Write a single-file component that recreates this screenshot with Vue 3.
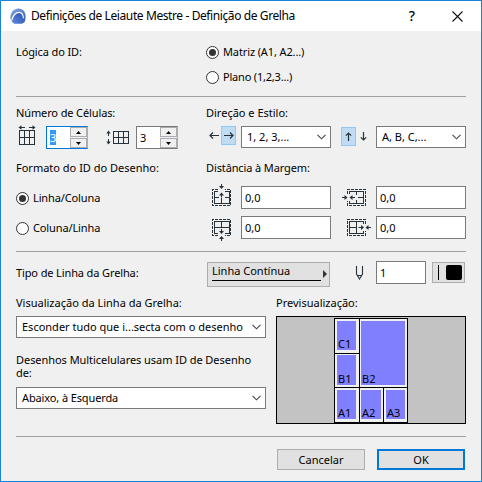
<script setup>
import { ref } from 'vue'

const idLogic = ref('matrix')
const idFormat = ref('row')
const margins = ref({ top: '0,0', left: '0,0', bottom: '0,0', right: '0,0' })
const cells = [
  { id: 'C1', x: 61, y: 5, w: 19, h: 29 },
  { id: 'B1', x: 61, y: 39, w: 19, h: 30 },
  { id: 'B2', x: 85, y: 5, w: 44, h: 64 },
  { id: 'A1', x: 61, y: 74, w: 19, h: 29 },
  { id: 'A2', x: 85, y: 74, w: 20, h: 29 },
  { id: 'A3', x: 110, y: 74, w: 19, h: 29 },
]
</script>

<template>
  <div class="dialog">
    <header class="titlebar">
      <svg class="logo" width="16" height="16" viewBox="0 0 16 16">
        <defs>
          <linearGradient id="band" x1="0" y1="0" x2="1" y2="1">
            <stop offset="0" stop-color="#86abea" /><stop offset="1" stop-color="#2e56b4" />
          </linearGradient>
          <linearGradient id="inner" x1="0" y1="1" x2="1" y2="0">
            <stop offset="0" stop-color="#5f8ade" /><stop offset="1" stop-color="#2a4fae" />
          </linearGradient>
        </defs>
        <path d="M.4 10.500C-.2 4.500 4 .4 8.600 .4c4.500 .1 7 3.600 7 8.200 0 2.500-.4 4-1.200 5.600l-2 1.200H4L1.300 13z" fill="url(#band)" />
        <path d="M2.200 13.500C3.500 8 6.200 4.700 9.300 4.800c2.900 .1 4 3.200 4.300 9l-2 1.600H4.200z" fill="url(#inner)" />
        <path d="M1.600 12.600C3 7.500 6 4.200 9.300 4.300c2.900 .1 3.900 2.800 4.200 6" fill="none" stroke="#fff" stroke-width="1.200" />
      </svg>
      <h1 class="title">Definições de Leiaute Mestre - Definição de Grelha</h1>
      <span class="help">?</span>
      <svg class="close" width="11" height="11" viewBox="0 0 11 11"><path d="M.5.5l10 10M10.500.5l-10 10" stroke="#111" stroke-width="1.100" /></svg>
    </header>

    <main class="content">
      <section class="logic cols">
        <div class="label tight">Lógica do ID:</div>
        <div class="logic-options">
          <label class="radio tight" @click="idLogic = 'matrix'"><i class="dot" :class="{ on: idLogic === 'matrix' }"></i><span>Matriz (A1, A2...)</span></label>
          <label class="radio tighter" @click="idLogic = 'plan'"><i class="dot" :class="{ on: idLogic === 'plan' }"></i><span>Plano (1,2,3...)</span></label>
        </div>
      </section>

      <hr class="rule">

      <section class="cols numbers">
        <div>
          <div class="label tight">Número de Células:</div>
          <div class="controls">
            <svg class="ic-cols" width="30" height="23" viewBox="0 0 30 23">
              <g fill="none" stroke="#27323a" shape-rendering="crispEdges"><path d="M3.500 4.500h15v14h-15zM8.500 4.500v14M13.500 4.500v14M3.500 11.500h15M4 1.500h5M13 1.500h5" /></g>
              <path d="M2.500 1.500l3-2.200v4.400zM19.500 1.500l-3-2.200v4.400z" fill="#27323a" />
            </svg>
            <div class="spinner active">
              <span class="val"><mark>3</mark></span>
              <span class="steps"><b><svg width="5" height="3"><path d="M0 3h5L2.500 0z" /></svg></b><b><svg width="5" height="3"><path d="M0 0h5L2.500 3z" /></svg></b></span>
            </div>
            <svg class="ic-rows" width="30" height="23" viewBox="0 0 30 23">
              <g fill="none" stroke="#27323a" shape-rendering="crispEdges"><path d="M7.500 5.500h15v12h-15zM12.500 5.500v12M17.500 5.500v12M7.500 11.500h15M2.500 6v4M2.500 13v4" /></g>
              <path d="M2.500 4.500l2.200 3h-4.400zM2.500 18.500l2.200-3h-4.400z" fill="#27323a" />
            </svg>
            <div class="spinner">
              <span class="val">3</span>
              <span class="steps"><b><svg width="5" height="3"><path d="M0 3h5L2.500 0z" /></svg></b><b><svg width="5" height="3"><path d="M0 0h5L2.500 3z" /></svg></b></span>
            </div>
          </div>
        </div>
        <div>
          <div class="label">Direção e Estilo:</div>
          <div class="controls">
            <div class="pair">
              <span class="arrow"><svg width="10" height="7" viewBox="0 0 10 7"><path d="M10 3.500H1M4 .5l-3 3 3 3" /></svg></span>
              <span class="arrow sel"><svg width="10" height="7" viewBox="0 0 10 7"><path d="M0 3.500h9M6 .5l3 3-3 3" /></svg></span>
            </div>
            <div class="combo small"><span>1, 2, 3,...</span><svg class="chev" width="9" height="6" viewBox="0 0 9 6"><path d="M.5.8l4 4 4-4" /></svg></div>
            <div class="pair vertical">
              <span class="arrow sel"><svg width="7" height="9" viewBox="0 0 7 9"><path d="M3.500 9V1M.8 3.700L3.500 1l2.700 2.700" /></svg></span>
              <span class="arrow"><svg width="7" height="9" viewBox="0 0 7 9"><path d="M3.500 0v8M.8 5.300L3.500 8l2.700-2.700" /></svg></span>
            </div>
            <div class="combo small"><span>A, B, C,...</span><svg class="chev" width="9" height="6" viewBox="0 0 9 6"><path d="M.5.8l4 4 4-4" /></svg></div>
          </div>
        </div>
      </section>

      <section class="cols format">
        <div>
          <div class="label">Formato do ID do Desenho:</div>
          <div class="format-options">
            <label class="radio tight" @click="idFormat = 'row'"><i class="dot" :class="{ on: idFormat === 'row' }"></i><span>Linha/Coluna</span></label>
            <label class="radio tight" @click="idFormat = 'col'"><i class="dot" :class="{ on: idFormat === 'col' }"></i><span>Coluna/Linha</span></label>
          </div>
        </div>
        <div>
          <div class="label tight">Distância à Margem:</div>
          <div class="margins">
            <svg width="35" height="25" viewBox="0 0 35 25">
              <g class="frame"><path class="dash" d="M12 3.500H6.500v16h18v-16H19" /><path d="M12 5.500H8.500v12h15v-12H19M8.500 11.500h4M18.500 11.500h5M15.500 12v6" /></g>
              <path class="tips" d="M15-2h1v2h2l-2.500 3-2.500-3h2zM15 11.500h1v-2h2l-2.500-3-2.500 3h2z" />
            </svg>
            <div class="field">{{ margins.top }}</div>
            <svg width="45" height="25" viewBox="0 0 45 25">
              <g class="frame"><path class="dash" d="M16.500 8V3.500h18v16h-18V15" /><path d="M18.500 8V5.500h14v12h-14V15M27 11.500h5M25.500 6v3M25.500 14v4" /></g>
              <path class="tips" d="M11 11h2.500V9l3 2.500-3 2.500v-2H11zM24 11h-2.500V9l-3 2.500 3 2.500v-2H24z" />
            </svg>
            <div class="field">{{ margins.left }}</div>
            <svg width="35" height="25" viewBox="0 0 35 25">
              <g class="frame"><path class="dash" d="M12 19.500H6.500v-16h18v16H19" /><path d="M12 17.500H8.500v-12h15v12H19M8.500 11.500h15M15.500 6v5" /></g>
              <path class="tips" d="M15 13h1v2h2l-2.500 3-2.500-3h2zM15 25h1v-2h2l-2.500-3-2.500 3h2z" />
            </svg>
            <div class="field">{{ margins.bottom }}</div>
            <svg width="45" height="25" viewBox="0 0 45 25">
              <g class="frame"><path class="dash" d="M34.500 8V3.500h-18v16h18V15" /><path d="M32.500 8V5.500h-14v12h14V15M18.500 11.500h7M25.500 6v12" /></g>
              <path class="tips" d="M27.500 11H30V9l3 2.500-3 2.500v-2h-2.500zM40 11h-2.500V9l-3 2.500 3 2.500v-2H40z" />
            </svg>
            <div class="field">{{ margins.right }}</div>
          </div>
        </div>
      </section>

      <hr class="rule">

      <section class="line-row">
        <div class="label tight">Tipo de Linha da Grelha:</div>
        <div class="line-btn">
          <div class="line-name"><span>Linha Contínua</span></div>
          <svg width="4" height="8" viewBox="0 0 4 8"><path d="M0 0l4 4-4 4z" fill="#333" /></svg>
        </div>
        <svg class="pen" width="9" height="15" viewBox="0 0 9 15"><path d="M1.500 0v8l3 5 3-5V0M2.500 9.500h4" fill="none" stroke="#27323a" stroke-width="1.100" /></svg>
        <div class="field pen-field">1</div>
        <div class="pen-btn"><i class="stroke"></i><i class="swatch"></i></div>
      </section>

      <section class="bottom">
        <div class="left">
          <div class="label">Visualização da Linha da Grelha:</div>
          <div class="combo"><span>Esconder tudo que i...secta com o desenho</span><svg class="chev" width="9" height="6" viewBox="0 0 9 6"><path d="M.5.8l4 4 4-4" /></svg></div>
          <div class="multi">Desenhos Multicelulares usam ID de Desenho<br>de:</div>
          <div class="combo tight"><span>Abaixo, à Esquerda</span><svg class="chev" width="9" height="6" viewBox="0 0 9 6"><path d="M.5.8l4 4 4-4" /></svg></div>
        </div>
        <div class="right">
          <div class="label">Previsualização:</div>
          <svg class="preview" width="190" height="108" viewBox="0 0 190 108">
            <g shape-rendering="crispEdges">
              <rect x=".5" y=".5" width="189" height="107" fill="#c3c3c3" stroke="#000" />
              <rect x="58.500" y="2.500" width="73" height="104" fill="#f0f0f0" stroke="#000" />
              <path d="M83.500 2v104M107.500 71v35M58 37.500h25M58 71.500h73" stroke="#000" fill="none" />
              <rect v-for="c in cells" :key="c.id" :x="c.x" :y="c.y" :width="c.w" :height="c.h" fill="#8080ff" />
            </g>
            <text v-for="c in cells" :key="c.id" :x="c.x + 1" :y="c.y + c.h - 2">{{ c.id }}</text>
          </svg>
        </div>
      </section>

      <hr class="rule">

      <footer class="actions">
        <button class="btn">Cancelar</button>
        <button class="btn primary">OK</button>
      </footer>
    </main>
  </div>
</template>

<style>
body { background: #f0f0f0; }
</style>

<style scoped>
.dialog { box-sizing: border-box; width: 482px; height: 482px; border: 1px solid #1883d7; background: #f0f0f0; font: 11px/16px "Noto Sans", "Open Sans", sans-serif; color: #000; overflow: hidden; }
.dialog *, .dialog *::before { box-sizing: border-box; }
svg { display: block; flex: none; overflow: visible; }
span, .label { white-space: nowrap; }
.tight { letter-spacing: -0.12px; }
.tighter { letter-spacing: -0.2px; }
.titlebar { height: 30px; background: #fff; display: flex; align-items: center; padding: 0 18px 0 9px; }
.title { margin: 0 0 0 5px; flex: 1; font-size: 12px; font-weight: 400; line-height: 16px; letter-spacing: -0.4px; white-space: nowrap; }
.help { font-size: 14px; font-weight: 500; margin-right: 37px; }
.content { padding: 0 15px; }
.cols { display: grid; grid-template-columns: 190px 260px; }
.rule { width: 450px; height: 1px; margin: 0; border: 0; background: #a0a0a0; }
.logic { height: 65px; padding-top: 13px; }
.logic-options { display: flex; flex-direction: column; gap: 9px; }
.radio { display: flex; align-items: center; gap: 4px; height: 16px; }
.dot { display: grid; place-items: center; width: 13px; height: 13px; border: 1px solid #333; border-radius: 50%; background: #fff; }
.dot.on::before { content: ""; width: 7px; height: 7px; border-radius: 50%; background: #333; }
.numbers { padding-top: 8px; height: 63px; }
.controls { display: flex; align-items: flex-start; padding-top: 5px; height: 28px; }
.spinner { width: 42px; height: 23px; display: flex; background: #fff; border: 1px solid #7a7a7a; border-right-color: #abadb3; }
.spinner.active { border-color: #0078d7 #abadb3 #0078d7 #0078d7; }
.val { flex: 1; padding: 3px 0 0 3px; }
.val mark { background: #3399ff; color: #fff; }
.steps { width: 17px; display: flex; flex-direction: column; background: #f0f0f0; gap: 1px; }
.steps b { height: 10px; border: 1px solid #abadb3; display: grid; place-items: center; background: #f0f0f0; }
.ic-rows { margin-left: 18px; }
.pair { display: flex; width: 35px; }
.pair.vertical { width: 45px; padding: 1px 0 0 10px; }
.arrow { width: 15px; height: 19px; display: grid; place-items: center; }
.arrow.sel { background: #bfdcf4; border: 1px solid #90c8f6; }
.arrow svg { fill: none; stroke: #27323a; stroke-width: 1.2; }
.pair + .combo { flex: none; }
.combo { height: 22px; width: 250px; background: #fff; border: 1px solid #7a7a7a; display: flex; align-items: center; justify-content: space-between; padding: 0 4px 0 5px; }
.combo.small { width: 90px; }
.chev { fill: none; stroke: #444; stroke-width: 1.1; }
.format { height: 91px; }
.format-options { display: flex; flex-direction: column; gap: 14px; padding-top: 14px; }
.margins { display: grid; grid-template-columns: 35px 90px 45px 90px; row-gap: 7px; padding-top: 10px; }
.margins svg { height: 25px; margin-bottom: -2px; }
.field { height: 23px; border: 1px solid #7a7a7a; background: #fff; padding: 3px 0 0 3px; }
.frame { fill: none; stroke: #27323a; shape-rendering: crispEdges; }
.dash { stroke-dasharray: 3 1; }
.tips { fill: #27323a; }
.line-row { display: flex; height: 43px; align-items: flex-start; padding-top: 9px; }
.line-row .label { width: 191px; padding-top: 4px; }
.line-btn { width: 123px; height: 25px; margin-top: 1px; border: 1px solid #adadad; background: #e1e1e1; display: flex; align-items: center; justify-content: space-between; padding: 0 2px 0 4px; }
.line-name { width: 109px; height: 18px; margin-top: -5px; border-bottom: 1px solid #000; }
.line-name + svg { margin-top: -1px; }
.pen { margin: 5px 12px 0 25px; }
.pen-field { width: 50px; }
.pen-btn { width: 33px; height: 21px; margin: 1px 0 0 6px; border: 1px solid #adadad; background: #e1e1e1; display: flex; align-items: center; padding-left: 5px; gap: 7px; }
.stroke { width: 1px; height: 15px; background: #000; }
.swatch { width: 16px; height: 15px; border-radius: 2px; background: #000; }
.bottom { display: flex; height: 141px; gap: 10px; }
.left { width: 250px; }
.bottom .label { height: 21px; }
.multi { line-height: 13px; padding-top: 15px; height: 49px; letter-spacing: -0.05px; white-space: nowrap; }
.preview text { font-size: 11px; fill: #000; }
.actions { display: flex; justify-content: flex-end; gap: 12px; padding: 12px 1px 0 0; }
.btn { width: 88px; height: 21px; padding: 0; border: 1px solid #adadad; background: #e1e1e1; font: inherit; line-height: 17px; color: #000; }
.btn.primary { border: 2px solid #0078d7; }
</style>
